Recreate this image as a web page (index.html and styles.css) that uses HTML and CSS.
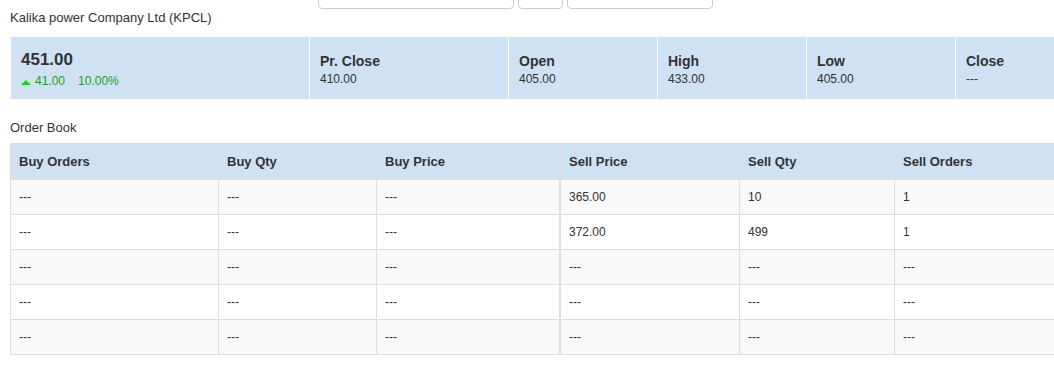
FILE: index.html
```html
<!DOCTYPE html>
<html>
<head>
<meta charset="utf-8">
<link rel="stylesheet" href="styles.css">
</head>
<body>
<div class="page">
  <div class="toolbar">
    <div class="field field-wide"></div>
    <div class="field field-small"></div>
    <div class="field field-mid"></div>
  </div>
  <div class="title">Kalika power Company Ltd (KPCL)</div>

  <div class="stats">
    <div class="stat stat-main">
      <div class="ltp">451.00</div>
      <div class="change">
        <svg class="up" width="10" height="5" viewBox="0 0 10 5"><polygon points="0,5 10,5 5,0" fill="#1fcc1f"/></svg>
        <span>41.00</span><span class="pct">10.00%</span>
      </div>
    </div>
    <div class="stat stat-wide">
      <div class="label">Pr. Close</div>
      <div class="value">410.00</div>
    </div>
    <div class="stat">
      <div class="label">Open</div>
      <div class="value">405.00</div>
    </div>
    <div class="stat">
      <div class="label">High</div>
      <div class="value">433.00</div>
    </div>
    <div class="stat">
      <div class="label">Low</div>
      <div class="value">405.00</div>
    </div>
    <div class="stat stat-last">
      <div class="label">Close</div>
      <div class="value">---</div>
    </div>
  </div>

  <div class="section-title">Order Book</div>
  <table class="book">
    <colgroup>
      <col class="c1"><col class="c2"><col class="c3"><col class="c4"><col class="c5"><col class="c6">
    </colgroup>
    <thead>
      <tr><th>Buy Orders</th><th>Buy Qty</th><th>Buy Price</th><th class="sell">Sell Price</th><th>Sell Qty</th><th class="last">Sell Orders</th></tr>
    </thead>
    <tbody>
      <tr><td>---</td><td>---</td><td>---</td><td class="sell">365.00</td><td>10</td><td class="last">1</td></tr>
      <tr><td>---</td><td>---</td><td>---</td><td class="sell">372.00</td><td>499</td><td class="last">1</td></tr>
      <tr><td>---</td><td>---</td><td>---</td><td class="sell">---</td><td>---</td><td class="last">---</td></tr>
      <tr><td>---</td><td>---</td><td>---</td><td class="sell">---</td><td>---</td><td class="last">---</td></tr>
      <tr><td>---</td><td>---</td><td>---</td><td class="sell">---</td><td>---</td><td class="last">---</td></tr>
    </tbody>
  </table>
</div>
</body>
</html>
```

FILE: styles.css
```css
html, body {
  margin: 0;
  padding: 0;
  background: #fff;
}
body {
  font-family: "Liberation Sans", Arial, sans-serif;
  color: #333;
  font-size: 13px;
}
.page {
  padding: 0 0 0 10px;
}
.toolbar {
  display: flex;
  align-items: flex-end;
  gap: 4px;
  height: 9px;
  margin-left: 308px;
}
.field {
  flex: none;
  height: 34px;
  box-sizing: border-box;
  border: 1px solid #ccc;
  border-radius: 4px;
  background: #fff;
}
.field-wide { width: 196px; }
.field-small { width: 45px; }
.field-mid { width: 146px; }

.title {
  font-size: 13px;
  line-height: 18px;
}

.stats {
  display: flex;
  margin: 10px 0 0 1px;
  height: 62px;
  background: #cfe1f3;
}
.stat {
  flex: none;
  box-sizing: border-box;
  width: 149px;
  border-left: 1px solid #fff;
  padding: 15px 10px 0 10px;
}
.stat-main {
  width: 298px;
  border-left: none;
  padding-top: 13px;
}
.stat-wide { width: 199px; }
.stat-last { flex: 1; }
.label {
  font-weight: bold;
  font-size: 14px;
  line-height: 18px;
}
.value {
  font-size: 12px;
  line-height: 18px;
}
.ltp {
  font-weight: bold;
  font-size: 17px;
  line-height: 20px;
}
.change {
  display: flex;
  align-items: center;
  font-size: 12px;
  line-height: 18px;
  color: #17a317;
  margin-top: 2px;
}
.change .up {
  display: block;
  margin: 2px 4px 0 0;
}
.change .pct {
  margin-left: 13px;
}

.section-title {
  font-size: 13px;
  line-height: 18px;
  margin-top: 20px;
}
.book {
  margin-top: 6px;
  table-layout: fixed;
  width: 100%;
  border-collapse: separate;
  border-spacing: 0;
  border-left: 1px solid #ddd;
  border-top: 1px solid #ddd;
}
.c1 { width: 208px; }
.c2 { width: 158px; }
.c3 { width: 183px; }
.c4 { width: 180px; }
.c5 { width: 155px; }
.c6 { width: auto; }
.book th, .book td {
  box-sizing: border-box;
  border-right: 1px solid #ddd;
  border-bottom: 1px solid #ddd;
  padding: 0 8px;
  text-align: left;
  vertical-align: middle;
  white-space: nowrap;
}
.book .last {
  border-right: none;
}
.book th {
  height: 36px;
  border-bottom-width: 2px;
  background: #cfe1f3;
  font-size: 13px;
  font-weight: bold;
}
.book td {
  height: 35px;
  font-size: 12px;
}
.book .sell {
  border-left: 1px solid #ddd;
}
.book tbody tr:nth-child(odd) td {
  background: #f9f9f9;
}
.book tbody tr:nth-child(even) td {
  background: #fff;
}
```
